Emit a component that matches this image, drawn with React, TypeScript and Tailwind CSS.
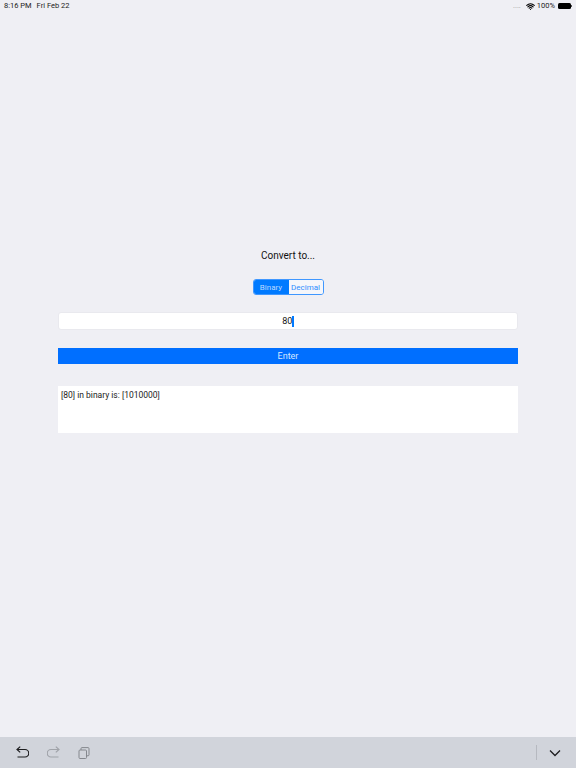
import { Wifi } from "lucide-react";

function StatusBar() {
  return (
    <div className="flex h-[12px] items-center justify-between pl-1 pr-[4px] text-[7.5px] text-[#222]">
      <div className="flex gap-[5px]">
        <span>8:16 PM</span>
        <span>Fri Feb 22</span>
      </div>
      <div className="flex items-center gap-[2px]">
        <span className="mr-[3px] leading-none text-[#999]">....</span>
        <Wifi className="h-[9px] w-[9px] text-black" strokeWidth={3} />
        <span className="text-[7.5px]">100%</span>
        <div className="ml-px flex items-center">
          <div className="h-[6px] w-[13px] rounded-[1.5px] bg-black" />
          <div className="h-[2px] w-px bg-[#555]" />
        </div>
      </div>
    </div>
  );
}

function Toolbar() {
  return (
    <div className="flex h-[31px] items-center justify-between bg-[#d1d4db] pl-[16px] pr-[15px]">
      <div className="flex items-center gap-[18px]">
        <svg width="13" height="14" viewBox="0 0 13 14" fill="none" stroke="#1d1d1f" strokeWidth="1.2">
          <path d="M1 3.5h8a3.6 3.6 0 0 1 0 7.5H1.5" />
          <path d="M4.2 .6 1 3.5l3.2 2.9" />
        </svg>
        <svg width="13" height="14" viewBox="0 0 13 14" fill="none" stroke="#a0a3a9" strokeWidth="1.2">
          <path d="M12 3.5H4a3.6 3.6 0 0 0 0 7.5H11.5" />
          <path d="M8.8 .6 12 3.5 8.8 6.4" />
        </svg>
        <svg width="12" height="12" viewBox="0 0 12 12" fill="none" stroke="#85888e" strokeWidth="1">
          <rect x="1" y="3" width="7.5" height="8.5" rx="1" />
          <path d="M3 3V1.6a1 1 0 0 1 1-1h6a1 1 0 0 1 1 1v6.2a1 1 0 0 1-1 1H8.5" />
        </svg>
      </div>
      <div className="flex items-center gap-[12px]">
        <div className="h-[15px] w-px bg-[#b6b9c0]" />
        <svg width="12" height="8" viewBox="0 0 12 8" fill="none" stroke="#1d1d1f" strokeWidth="1.3">
          <path d="M1 1.5 6 6.5l5-5" />
        </svg>
      </div>
    </div>
  );
}

export default function App() {
  return (
    <div className="flex h-[768px] w-[576px] flex-col overflow-hidden bg-[#efeff4] font-['Roboto','Liberation_Sans',sans-serif]">
      <StatusBar />
      <main className="flex flex-1 flex-col items-center px-[58px] pt-[237px]">
        <h1 className="pt-px text-[10px] leading-[11px] text-[#111]">Convert to...</h1>

        <div className="mt-[18px] flex h-[16px] w-[71px] overflow-hidden rounded-[3px] border border-[#3f97ff] text-[8px]">
          <div className="flex w-[35px] items-center justify-center bg-[#007aff] pt-px text-[#bcd9ff]">Binary</div>
          <div className="flex flex-1 items-center justify-center bg-[#f5f6fa] pt-px text-[#2f8fff]">Decimal</div>
        </div>

        <div className="mt-[17px] flex h-[18px] w-full items-center justify-center rounded-[3px] border border-[#e9e9ee] bg-white pt-px text-[9px] text-[#111]">
          80
          <span className="h-[11px] w-[1.5px] bg-[#007aff]" />
        </div>

        <button className="mt-[18px] h-[16px] w-full bg-[#006fff] pt-px text-[9px] text-[#d5e7ff]">Enter</button>

        <div className="mt-[22px] h-[47px] w-full bg-white px-[3px] pt-[3px] text-[8.5px] leading-[12px] text-[#222]">
          [80] in binary is: [1010000]
        </div>
      </main>
      <Toolbar />
    </div>
  );
}
